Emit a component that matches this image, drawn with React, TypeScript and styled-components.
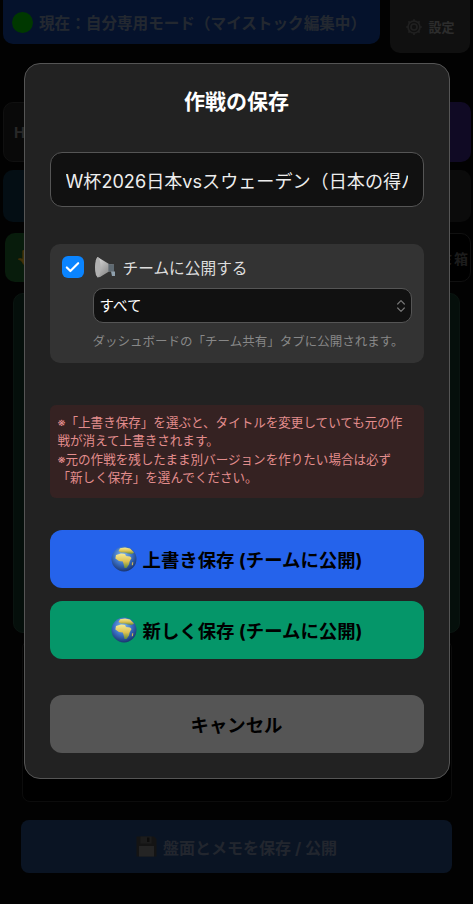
import styled, { createGlobalStyle } from 'styled-components';
import { Check, ChevronsUpDown } from 'lucide-react';

const GlobalStyle = createGlobalStyle`
    html, body {
        margin: 0;
        padding: 0;
        background: #000;
    }
    body, input, select, button {
        font-family: Inter, "Noto Sans CJK JP", sans-serif;
    }
    * {
        box-sizing: border-box;
    }
`

const Globe = () => (
    <svg width="26" height="26" viewBox="0 0 26 26">
        <defs>
            <radialGradient id="sea" cx="0.45" cy="0.35" r="0.72">
                <stop offset="0" stopColor="#8fc2ec" />
                <stop offset="0.5" stopColor="#3a70c4" />
                <stop offset="1" stopColor="#12265c" />
            </radialGradient>
            <linearGradient id="land" x1="0" y1="0" x2="0" y2="1">
                <stop offset="0" stopColor="#f4ea96" />
                <stop offset="0.55" stopColor="#dcc050" />
                <stop offset="1" stopColor="#5f8a3c" />
            </linearGradient>
        </defs>
        <circle cx="13" cy="13" r="12.5" fill="url(#sea)" />
        <path d="M9 2.2 L14 1.4 L19 2.6 L23 6.4 L21 8 L17 7.5 L14 6.5 L10 6.5 L7.5 5 Z" fill="url(#land)" />
        <path d="M5 9 L10 7.6 L14 8 L15 10 L19 10.4 L20.5 12 L18.6 15.5 L18 18.5 L15.5 22 L13.5 22 L12.6 18 L11.8 15.4 L8 15 L4.4 12.4 Z" fill="url(#land)" />
        <path d="M21 16.5 L22.2 16 L22 19 L20.8 19.6 Z" fill="#c9b458" />
    </svg>
)

const Megaphone = () => (
    <svg width="22" height="23" viewBox="0 0 22 23">
        <defs>
            <linearGradient id="horn" x1="0" y1="0" x2="1" y2="1">
                <stop offset="0" stopColor="#e2e2e2" />
                <stop offset="1" stopColor="#6f6f6f" />
            </linearGradient>
        </defs>
        <path d="M3.5 1 L15 8 L20 8.6 L20 15.6 L15 15.6 L6 21 L3.5 21.6 C1 16 1 6 3.5 1 Z" fill="url(#horn)" />
        <ellipse cx="3.8" cy="11.2" rx="2.8" ry="10" fill="#b0b0b0" />
        <path d="M14.4 8 L20 8.6 L20 15.6 L14.4 15.6 Z" fill="#5f6a72" />
        <path d="M17 15.6 L21 15.6 L21 20 L18 20 Z" fill="#8fa0ad" />
    </svg>
)

const Floppy = () => (
    <svg width="21" height="21" viewBox="0 0 21 21">
        <path d="M0.5 0.5 H18 L20.5 3 V20.5 H0.5 Z" fill="#505050" />
        <rect x="4.5" y="0.5" width="11" height="7" fill="#707070" />
        <rect x="11" y="1.5" width="2.5" height="4.5" fill="#303030" />
        <rect x="3" y="10" width="15" height="10.5" fill="#909090" />
    </svg>
)

const Gear = () => (
    <svg width="18" height="18" viewBox="0 0 24 24" fill="none" stroke="#808080" strokeWidth="2.2">
        <circle cx="12" cy="12" r="4" />
        <circle cx="12" cy="12" r="8" />
        <path d="M12 1.5V4M12 20v2.5M1.5 12H4M20 12h2.5M4.6 4.6l1.8 1.8M17.6 17.6l1.8 1.8M4.6 19.4l1.8-1.8M17.6 6.4l1.8-1.8" />
    </svg>
)

const App = () => {
    return (
        <>
            <GlobalStyle />
            <Page>
                <TopRow>
                    <ModeBar><GreenDot />現在：自分専用モード（マイストック編集中）</ModeBar>
                    <SettingsButton><Gear />設定</SettingsButton>
                </TopRow>
                <ToolRow $height={60} $top={49}>
                    <ToolBox $bg="#242424" $border="#404040"><ToolLabel>H</ToolLabel></ToolBox>
                    <ToolBox $bg="#402890" />
                </ToolRow>
                <ToolRow $height={52} $top={8}>
                    <ToolBox $bg="#103850" />
                    <ToolBox $bg="#2c2c2c" />
                </ToolRow>
                <ToolRow $height={49} $top={11} $inset={2}>
                    <ToolBox $bg="#207030"><HandMark>👆</HandMark></ToolBox>
                    <ToolBox $bg="#000" $border="#404040"><BoxLabel>ゴミ箱</BoxLabel></ToolBox>
                </ToolRow>
                <BoardPanel />
                <MemoBox />
                <SaveButton><Floppy />盤面とメモを保存 / 公開</SaveButton>
            </Page>
            <Overlay>
                <Modal>
                    <Title>作戦の保存</Title>
                    <TitleInput readOnly value="W杯2026日本vsスウェーデン（日本の得パターン）" />
                    <PublishPanel>
                        <CheckRow>
                            <CheckMark><Check size={17} color="#fff" strokeWidth={3} /></CheckMark>
                            <Megaphone />
                            チームに公開する
                        </CheckRow>
                        <SelectWrap>
                            <TeamSelect defaultValue="all">
                                <option value="all">すべて</option>
                            </TeamSelect>
                            <SelectIcon><ChevronsUpDown size={16} color="#777" strokeWidth={1.8} /></SelectIcon>
                        </SelectWrap>
                        <Help>ダッシュボードの「チーム共有」タブに公開されます。</Help>
                    </PublishPanel>
                    <Warning>
                        ※「上書き保存」を選ぶと、タイトルを変更していても元の作戦が消えて上書きされます。<br />
                        ※元の作戦を残したまま別バージョンを作りたい場合は必ず「新しく保存」を選んでください。
                    </Warning>
                    <ActionButton $bg="#2563eb" $top={32}><Globe />上書き保存 (チームに公開)</ActionButton>
                    <ActionButton $bg="#059669" $top={13}><Globe />新しく保存 (チームに公開)</ActionButton>
                    <ActionButton $bg="#555" $top={36}>キャンセル</ActionButton>
                </Modal>
            </Overlay>
        </>
    )
}

const Page = styled.div`
    width: 473px;
    height: 904px;
    overflow: hidden;
    background: #0a0a0a;
`

const TopRow = styled.div`
    display: flex;
    align-items: flex-start;
    gap: 10px;
    padding: 0 3px;
`

const ModeBar = styled.div`
    display: flex;
    align-items: center;
    gap: 6px;
    width: 377px;
    height: 44px;
    padding-left: 9px;
    background: #1448b0;
    border-radius: 0 0 10px 10px;
    color: #8ca0c0;
    font-size: 15.6px;
    font-weight: 700;
    white-space: nowrap;
`

const GreenDot = styled.span`
    width: 21px;
    height: 21px;
    border-radius: 50%;
    background: #00e000;
    flex: none;
`

const SettingsButton = styled.div`
    display: flex;
    align-items: center;
    justify-content: center;
    gap: 5px;
    width: 80px;
    height: 53px;
    background: #404040;
    border-radius: 0 0 10px 10px;
    color: #b0b0b0;
    font-size: 13px;
    font-weight: 700;
`

const ToolRow = styled.div<{ $height: number; $top: number; $inset?: number }>`
    display: grid;
    grid-template-columns: 1fr 1fr;
    gap: 6px;
    height: ${props => props.$height}px;
    margin-top: ${props => props.$top}px;
    padding: 0 2px 0 ${props => 3 + (props.$inset || 0)}px;
`

const ToolBox = styled.div<{ $bg: string; $border?: string }>`
    display: flex;
    align-items: center;
    padding-left: 10px;
    background: ${props => props.$bg};
    border: 1px solid ${props => props.$border || 'transparent'};
    border-radius: 10px;
`

const ToolLabel = styled.span`
    color: #a0a0a0;
    font-size: 15px;
    font-weight: 700;
`

const HandMark = styled.span`
    color: #c07820;
    font-size: 15px;
`

const BoxLabel = styled.span`
    margin-left: auto;
    margin-right: 2px;
    color: #707070;
    font-size: 14px;
    font-weight: 700;
`

const BoardPanel = styled.div`
    width: 447px;
    height: 340px;
    margin: 11px 0 0 13px;
    background: #143c2c;
    border: 1px solid #285040;
    border-radius: 10px;
`

const MemoBox = styled.div`
    width: 430px;
    height: 162px;
    margin: 7px 0 0 22px;
    background: #000;
    border: 1px solid #303030;
    border-radius: 8px;
`

const SaveButton = styled.div`
    display: flex;
    align-items: center;
    justify-content: center;
    gap: 6px;
    width: 431px;
    height: 53px;
    margin: 18px 0 0 21px;
    background: #28508c;
    border-radius: 8px;
    color: #8898b8;
    font-size: 16px;
    font-weight: 700;
`

const Overlay = styled.div`
    position: fixed;
    inset: 0;
    display: flex;
    justify-content: center;
    align-items: flex-start;
    padding-top: 63px;
    background: rgba(0, 0, 0, 0.75);
`

const Modal = styled.div`
    width: 426px;
    height: 716px;
    padding: 24px 25px 25px;
    background: #222;
    border: 1px solid #555;
    border-radius: 16px;
`

const Title = styled.div`
    height: 28px;
    color: #fff;
    font-size: 21px;
    line-height: 28px;
    font-weight: 700;
    text-align: center;
`

const TitleInput = styled.input`
    display: block;
    width: 100%;
    height: 55px;
    margin-top: 36px;
    padding: 0 15px;
    background: #111;
    border: 1px solid #555;
    border-radius: 12px;
    color: #eee;
    font-size: 18.1px;
    outline: none;
`

const PublishPanel = styled.div`
    height: 119px;
    margin-top: 37px;
    padding: 12px;
    background: #333;
    border-radius: 10px;
`

const CheckRow = styled.label`
    display: flex;
    align-items: center;
    height: 22px;
    color: #ddd;
    font-size: 15.7px;
    > svg {
        margin: 0 7px 0 10px;
        flex: none;
    }
`

const CheckMark = styled.span`
    display: flex;
    align-items: center;
    justify-content: center;
    width: 22px;
    height: 22px;
    background: #0a84ff;
    border-radius: 6px;
    flex: none;
`

const SelectWrap = styled.div`
    position: relative;
    margin: 10px 0 0 31px;
`

const TeamSelect = styled.select`
    display: block;
    width: 100%;
    height: 35px;
    padding: 0 6px;
    appearance: none;
    background: #111;
    border: 1px solid #555;
    border-radius: 10px;
    color: #fff;
    font-size: 14.5px;
    outline: none;
`

const SelectIcon = styled.span`
    position: absolute;
    top: 10px;
    right: 3px;
    display: flex;
`

const Help = styled.div`
    margin: 10px 0 0 31px;
    color: #888;
    font-size: 12.5px;
    line-height: 18px;
    white-space: nowrap;
`

const Warning = styled.div`
    height: 93px;
    margin-top: 42px;
    padding: 9px 18px 9px 8px;
    background: #352222;
    border-radius: 6px;
    color: #e38d8d;
    font-size: 12.55px;
    line-height: 18.4px;
`

const ActionButton = styled.button<{ $bg: string; $top: number }>`
    display: flex;
    align-items: center;
    justify-content: center;
    gap: 6px;
    width: 100%;
    height: 58px;
    margin-top: ${props => props.$top}px;
    padding: 0;
    background: ${props => props.$bg};
    border: none;
    border-radius: 12px;
    color: #000;
    font-size: 18.4px;
    font-weight: 700;
`

export default App;
